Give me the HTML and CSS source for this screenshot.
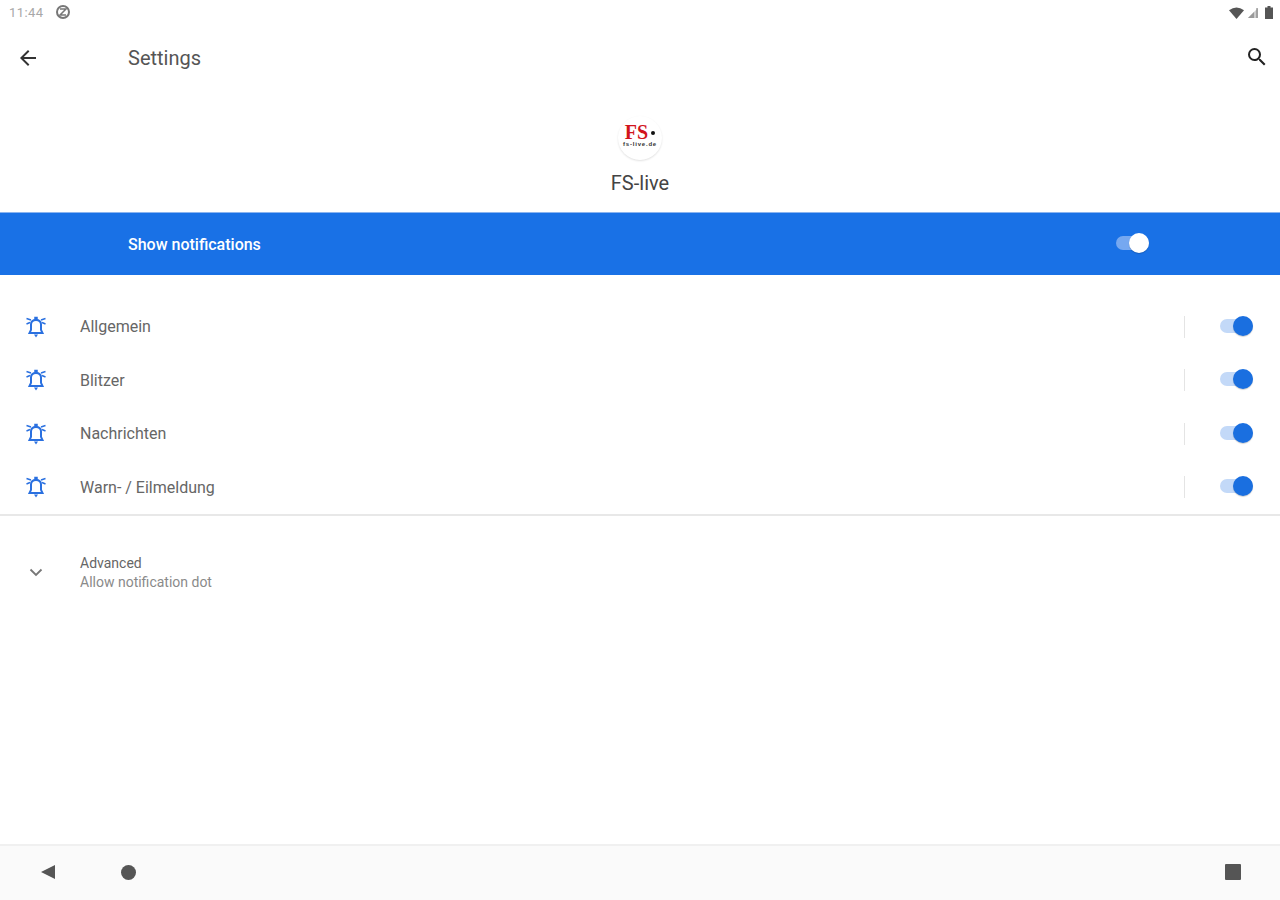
FILE: index.html
```html
<!DOCTYPE html>
<html lang="en">
<head>
    <meta charset="UTF-8">
    <meta name="viewport" content="width=device-width, initial-scale=1.0">
    <title>Settings</title>
    <link rel="stylesheet" href="styles.css">
</head>
<body>
    <div class="status-bar">
        <div class="status-left">
            <span class="clock">11:44</span>
            <svg class="dnd" width="16" height="16" viewBox="0 0 16 16">
                <circle cx="8" cy="8" r="6" fill="none" stroke="#777" stroke-width="2"/>
                <path d="M5 5h6L5 11h6" fill="none" stroke="#777" stroke-width="1.5"/>
            </svg>
        </div>
        <div class="status-right">
            <svg class="wifi" width="15" height="12" viewBox="0 0 15 12"><path d="M0 3.2Q7.5-2.2 15 3.2L7.5 12z" fill="#555"/></svg>
            <svg class="signal" width="12" height="12" viewBox="0 0 12 12"><path d="M1 11L11 1v10z" fill="#ccc"/><path d="M1 11L7 5v6z" fill="#999"/><path d="M10 1v10" stroke="#777"/></svg>
            <svg class="battery" width="8" height="13" viewBox="0 0 8 13"><path d="M2.5 0h3v1.5H8V13H0V1.5h2.5z" fill="#555"/></svg>
        </div>
    </div>

    <header class="toolbar">
        <button class="icon-btn back-btn" aria-label="Back">
            <svg width="24" height="24" viewBox="0 0 24 24"><path d="M20 11H7.8l5.6-5.6L12 4l-8 8 8 8 1.4-1.4L7.8 13H20z" fill="#333"/></svg>
        </button>
        <h1>Settings</h1>
        <button class="icon-btn search-btn" aria-label="Search">
            <svg width="24" height="24" viewBox="0 0 24 24"><path d="M15.5 14h-.79l-.28-.27A6.471 6.471 0 0 0 16 9.5 6.5 6.5 0 1 0 9.5 16c1.61 0 3.09-.59 4.23-1.57l.27.28v.79l5 4.99L20.49 19l-4.99-5zm-6 0C7.01 14 5 11.99 5 9.5S7.01 5 9.5 5 14 7.01 14 9.5 11.99 14 9.5 14z" fill="#222"/></svg>
        </button>
    </header>

    <section class="app-header">
        <div class="app-logo">
            <div class="logo-mark">FS<span class="logo-dot"></span></div>
            <div class="logo-sub">fs-live.de</div>
        </div>
        <div class="app-name">FS-live</div>
    </section>

    <div class="master-row">
        <span>Show notifications</span>
        <span class="switch switch-white"><span class="knob"></span></span>
    </div>

    <main>
        <ul class="channels">
            <li class="channel">
                <svg class="bell" width="24" height="24" viewBox="0 0 24 24"><use href="#bell"/></svg>
                <span class="channel-name">Allgemein</span>
                <span class="sep"></span>
                <span class="switch"><span class="knob"></span></span>
            </li>
            <li class="channel">
                <svg class="bell" width="24" height="24" viewBox="0 0 24 24"><use href="#bell"/></svg>
                <span class="channel-name">Blitzer</span>
                <span class="sep"></span>
                <span class="switch"><span class="knob"></span></span>
            </li>
            <li class="channel">
                <svg class="bell" width="24" height="24" viewBox="0 0 24 24"><use href="#bell"/></svg>
                <span class="channel-name">Nachrichten</span>
                <span class="sep"></span>
                <span class="switch"><span class="knob"></span></span>
            </li>
            <li class="channel">
                <svg class="bell" width="24" height="24" viewBox="0 0 24 24"><use href="#bell"/></svg>
                <span class="channel-name">Warn- / Eilmeldung</span>
                <span class="sep"></span>
                <span class="switch"><span class="knob"></span></span>
            </li>
        </ul>

        <div class="advanced">
            <svg class="chevron" width="24" height="24" viewBox="0 0 24 24"><path d="M6.5 9.5L12 15l5.5-5.5" fill="none" stroke="#777" stroke-width="1.8"/></svg>
            <div>
                <div class="advanced-title">Advanced</div>
                <div class="advanced-sub">Allow notification dot</div>
            </div>
        </div>
    </main>

    <nav class="nav-bar">
        <div class="nav-left">
            <svg width="16" height="16" viewBox="0 0 16 16"><path d="M15 1v14L1 8z" fill="#555"/></svg>
            <span class="nav-home"></span>
        </div>
        <span class="nav-recents"></span>
    </nav>

    <svg class="defs" width="0" height="0">
        <symbol id="bell" viewBox="0 0 24 24">
            <path d="M12 5c-3 0-5 1.500-5 4.500v5.300L5.500 18h13L17 14.800V9.500C17 6.500 15 5 12 5z" fill="none" stroke="#2a70e0" stroke-width="2"/>
            <path d="M10 19.500h4L12 22.500z" fill="#2a70e0"/>
            <path d="M11 2.500h2V5h-2zM7 5L2.500 3.500M17 5l4.500-1.500M6 7.500L2.500 9M18 7.500L21.500 9" fill="#2a70e0" stroke="#2a70e0" stroke-width="1.500"/>
        </symbol>
    </svg>
</body>
</html>
```

FILE: styles.css
```css
* {
    box-sizing: border-box;
}
body {
    font-family: Roboto, 'Liberation Sans', sans-serif;
    margin: 0;
    height: 900px;
    overflow: hidden;
    display: flex;
    flex-direction: column;
    background-color: #fff;
    color: #444;
}
.defs {
    position: absolute;
}

.status-bar {
    height: 25px;
    padding: 0 7px 0 9px;
    display: flex;
    justify-content: space-between;
    align-items: center;
}
.status-left, .status-right {
    display: flex;
    align-items: center;
}
.status-left {
    gap: 12px;
}
.dnd {
    margin-bottom: 2px;
}
.status-right {
    gap: 3px;
}
.battery {
    margin-left: 3px;
}
.clock {
    font-size: 13px;
    color: #a8a8a8;
    letter-spacing: .4px;
}

.toolbar {
    height: 65px;
    padding: 0 11px 0 16px;
    display: flex;
    align-items: center;
}
.toolbar h1 {
    margin: 1px 0 0 88px;
    flex: 1;
    font-size: 20px;
    font-weight: 400;
    color: #555;
}
.icon-btn {
    width: 24px;
    height: 24px;
    padding: 0;
    border: none;
    background: none;
}
.search-btn {
    margin-bottom: 2px;
}

.app-header {
    height: 122px;
    padding-top: 26px;
    display: flex;
    flex-direction: column;
    align-items: center;
}
.app-logo {
    width: 44px;
    height: 44px;
    border-radius: 50%;
    background: #fff;
    box-shadow: 0 1px 2px rgba(0,0,0,.12);
    display: flex;
    flex-direction: column;
    align-items: center;
    padding-top: 9px;
    overflow: hidden;
}
.logo-mark {
    font-family: 'Liberation Serif', serif;
    font-weight: 700;
    font-size: 20px;
    line-height: 14px;
    color: #d2141c;
    display: flex;
    align-items: center;
}
.logo-dot {
    width: 4px;
    height: 4px;
    margin: 2px 0 0 3px;
    border-radius: 50%;
    background: #111;
}
.logo-sub {
    margin-top: 2px;
    font-family: 'Liberation Sans', sans-serif;
    font-weight: 700;
    font-size: 6px;
    line-height: 6px;
    letter-spacing: .8px;
    color: #333;
    white-space: nowrap;
}
.app-name {
    margin-top: 10px;
    font-size: 20px;
    line-height: 26px;
    color: #444;
}

.master-row {
    height: 63px;
    padding: 0 130px 0 128px;
    background-color: #1971e6;
    border-top: 1px solid #8ab4f0;
    display: flex;
    justify-content: space-between;
    align-items: center;
    color: #fff;
    font-size: 16px;
    font-weight: 500;
}
.master-row .switch {
    margin: -2px 1px 0 0;
}

.switch {
    position: relative;
    display: block;
    width: 33px;
    height: 14px;
    margin-top: -2px;
    border-radius: 7px;
    background-color: #c3d9f8;
}
.knob {
    position: absolute;
    top: -3px;
    right: 0;
    width: 20px;
    height: 20px;
    border-radius: 50%;
    background-color: #1a6fe0;
    box-shadow: 0 1px 1px rgba(0,0,0,.18);
}
.switch-white {
    background-color: #76a8f0;
}
.switch-white .knob {
    background-color: #fff;
}

main {
    flex: 1;
}
.channels {
    list-style: none;
    margin: 0;
    padding: 25px 0 0;
    border-bottom: 2px solid #e8e8e8;
}
.channel {
    height: 53.5px;
    padding: 0 27px 0 24px;
    display: flex;
    align-items: center;
}
.channel-name {
    flex: 1;
    margin-left: 32px;
    font-size: 16px;
    color: #666;
}
.sep {
    width: 1px;
    height: 22px;
    margin-right: 35px;
    background-color: #e4e4e4;
}

.advanced {
    padding: 37px 24px 0;
    display: flex;
    align-items: center;
    gap: 32px;
}
.chevron {
    margin-top: -2px;
}
.advanced-title {
    font-size: 14px;
    line-height: 20px;
    color: #666;
}
.advanced-sub {
    font-size: 14px;
    line-height: 19px;
    color: #8a8a8a;
}

.nav-bar {
    height: 56px;
    padding: 0 39px 2px 40px;
    background-color: #fafafa;
    border-top: 2px solid #f0f0f0;
    display: flex;
    justify-content: space-between;
    align-items: center;
}
.nav-left {
    display: flex;
    align-items: center;
    gap: 65px;
}
.nav-home {
    width: 15px;
    height: 15px;
    border-radius: 50%;
    background-color: #555;
}
.nav-recents {
    width: 16px;
    height: 16px;
    border-radius: 1px;
    background-color: #555;
}
```
